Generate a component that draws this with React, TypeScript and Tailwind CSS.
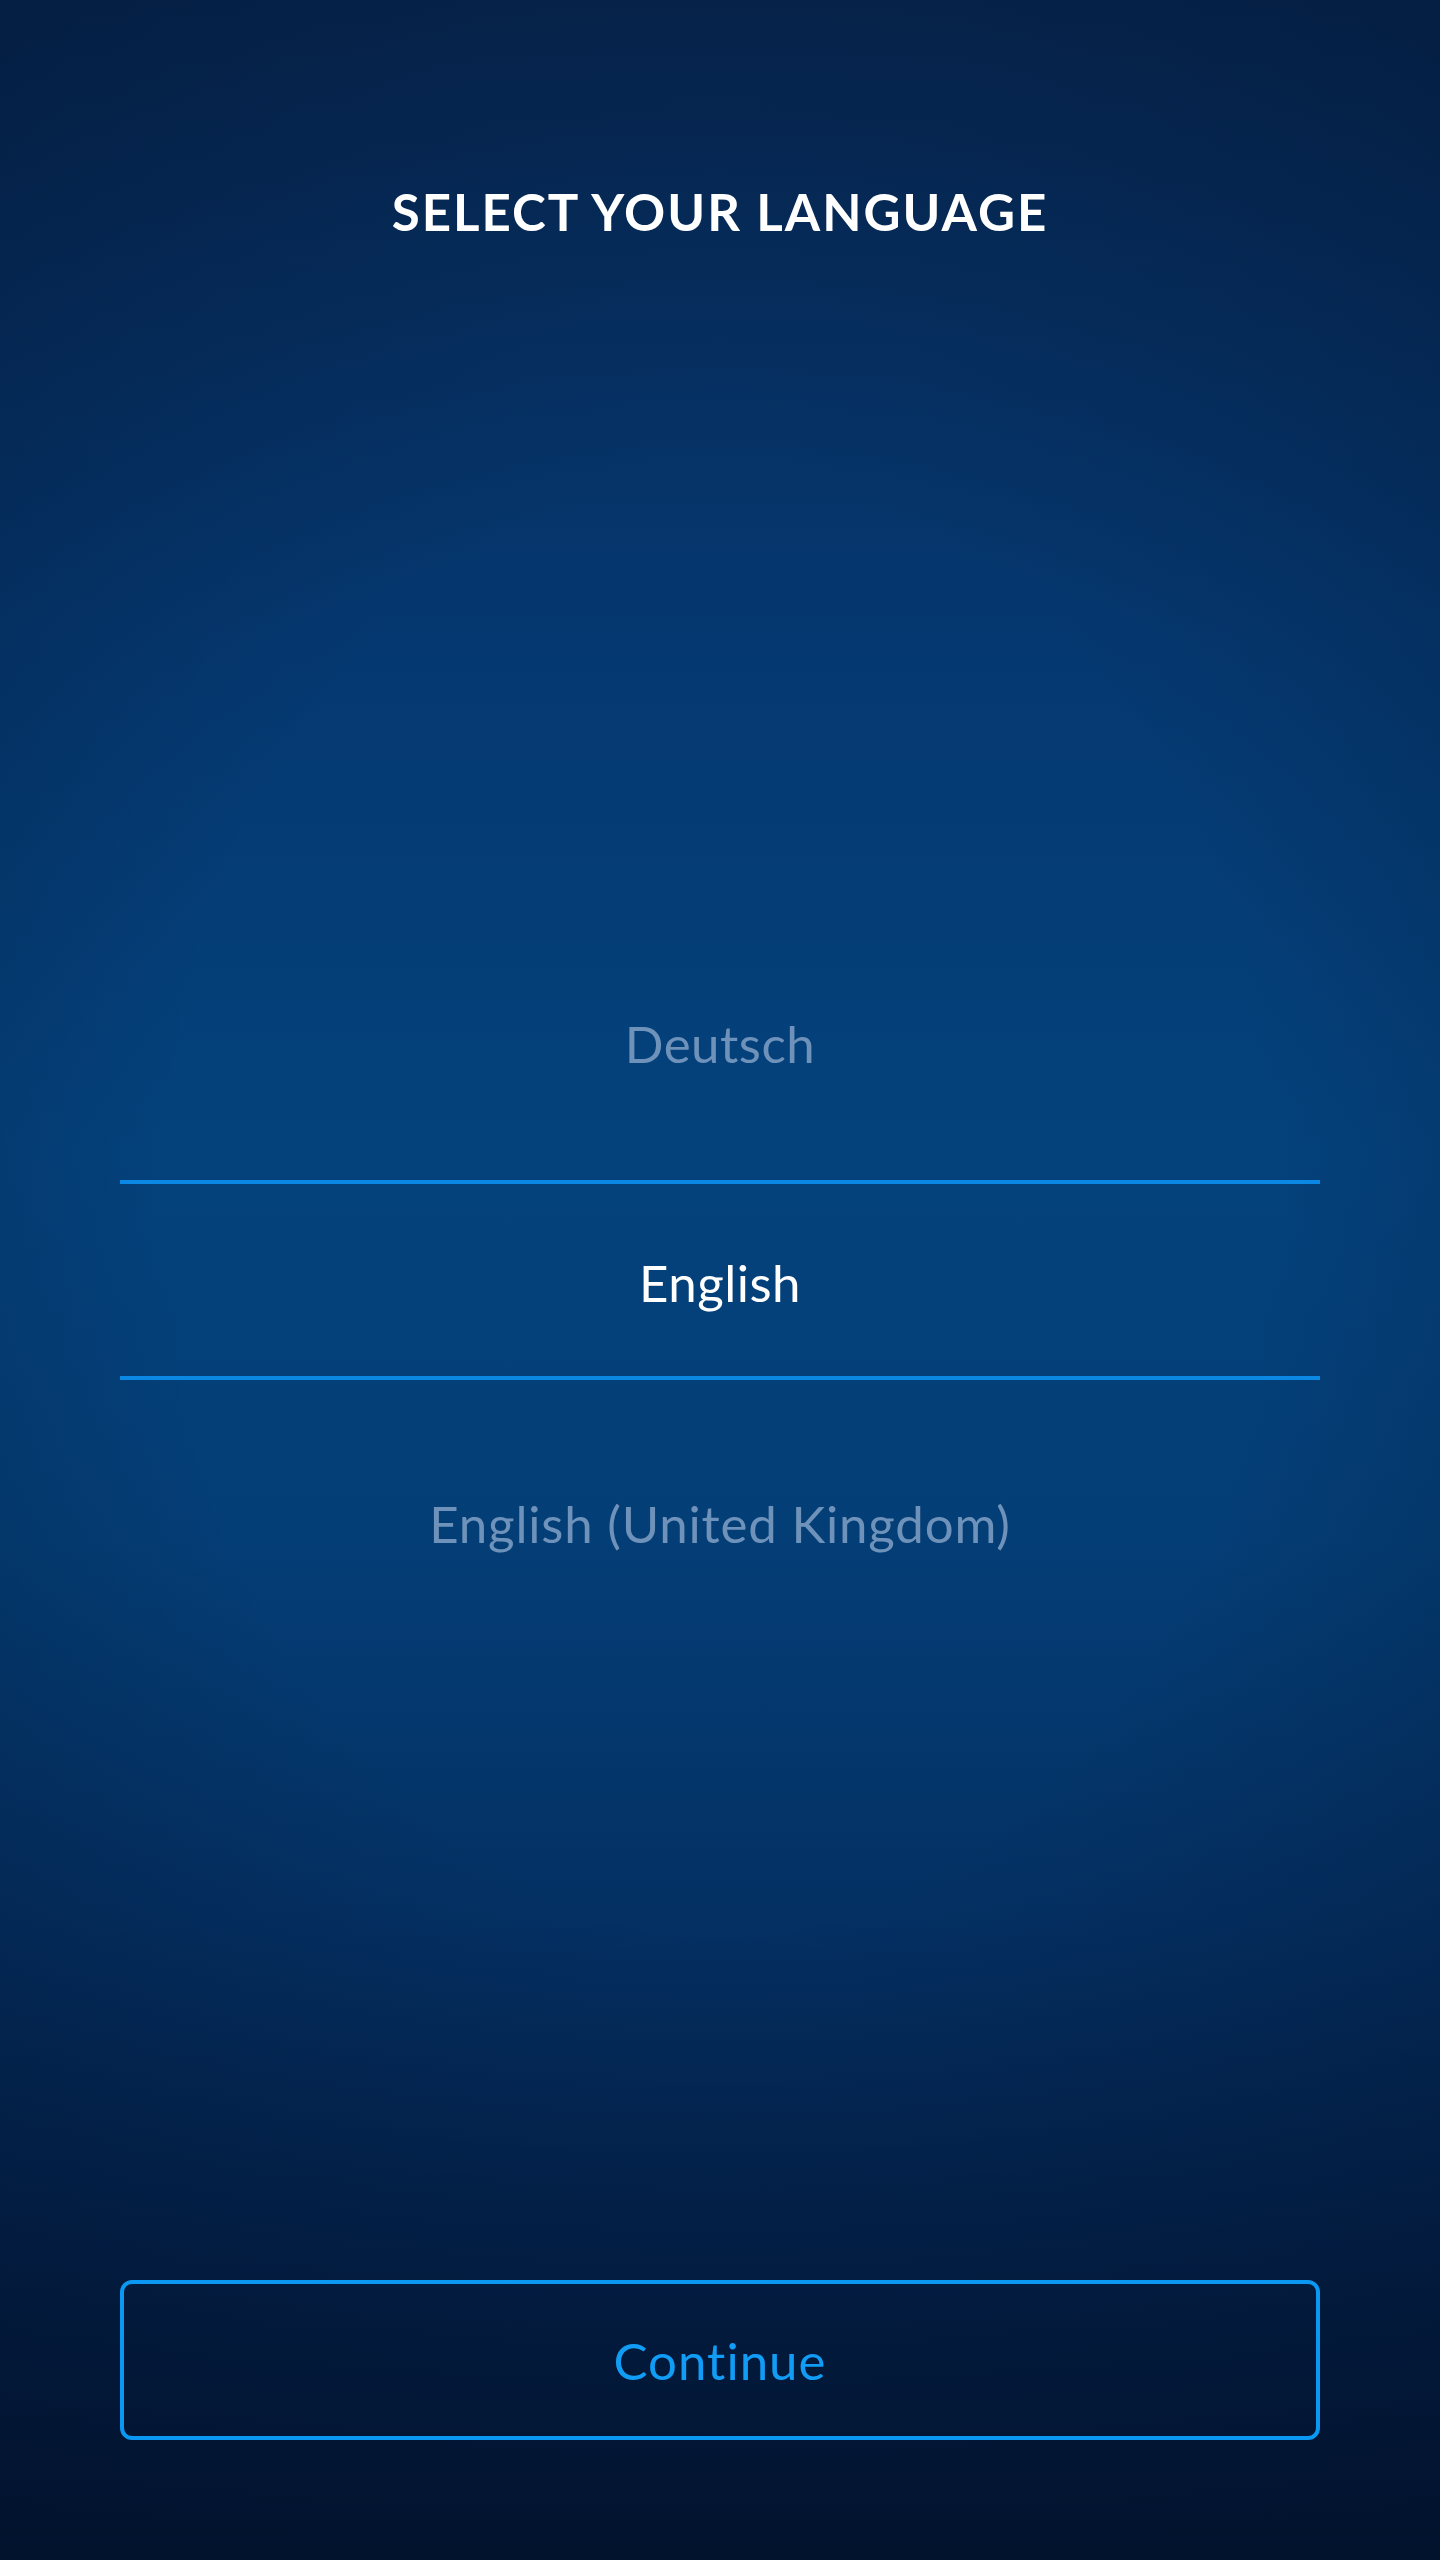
import React from "react";

export default function App() {
  const font = { fontFamily: 'Lato, "Noto Sans", "Liberation Sans", sans-serif' };
  return (
    <div
      className="relative w-[1440px] h-[2560px] overflow-hidden bg-[#031636] bg-[radial-gradient(ellipse_95%_70%_at_50%_47%,rgba(2,18,45,0)_40%,rgba(2,18,45,0.6)_100%),linear-gradient(to_bottom,#072854_0%,#053870_25%,#04427c_45%,#043e76_60%,#043063_75%,#032048_88%,#02132e_100%)] [font-variant-ligatures:none]"
      style={font}
    >
      <div className="flex flex-col h-full">
        <h1 className="pt-[186px] text-center text-white font-bold text-[51px] leading-none tracking-[2px]">
          SELECT YOUR LANGUAGE
        </h1>

        <div className="mt-[706px] mx-[120px] flex flex-col">
          <div className="h-[200px] flex items-center justify-center text-[51px] leading-none tracking-[0.5px] text-[#6e92ba]">
            Deutsch
          </div>
          <div className="mt-[37px] h-[200px] border-y-4 border-[#0a88e4] flex items-center justify-center pt-[4px] text-[51px] leading-none tracking-[0.5px] text-white">
            English
          </div>
          <div className="mt-[43px] h-[200px] flex items-center justify-center text-[51px] leading-none tracking-[0.8px] text-[#6e92ba]">
            English (United Kingdom)
          </div>
        </div>

        <div className="mt-auto mb-[120px] mx-[120px]">
          <button className="w-full h-[160px] rounded-[12px] border-4 border-[#0a98f2] bg-transparent flex items-center justify-center text-[51px] leading-none tracking-[1px] text-[#119cf5] [font-variant-ligatures:none]">
            Continue
          </button>
        </div>
      </div>
    </div>
  );
}
